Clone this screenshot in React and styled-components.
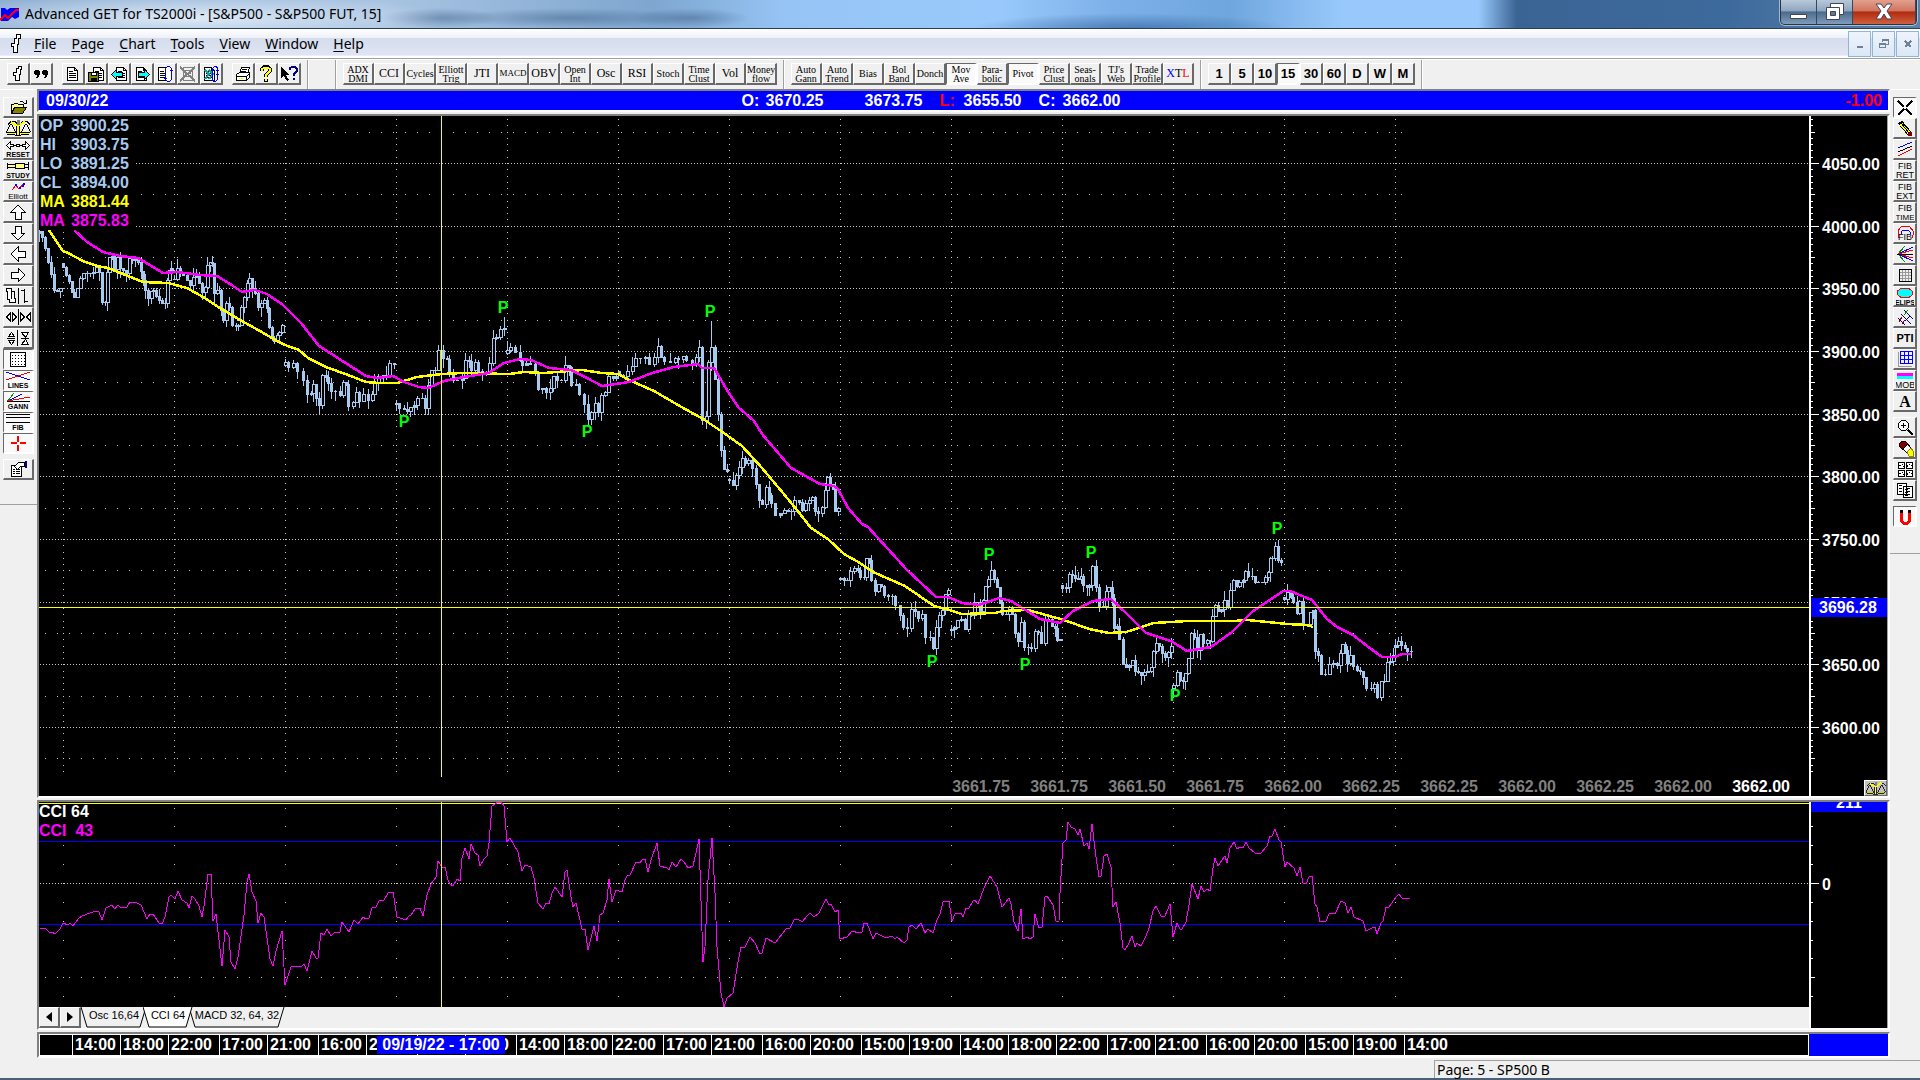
import React from 'react';
import styled, { createGlobalStyle, css } from 'styled-components';

const UI_FONT = '"Noto Sans", "Open Sans", sans-serif';
const CHART_FONT = '"Liberation Sans", Arial, sans-serif';

/* ---------- chart data ---------- */

const SESSIONS = [
  '39,231 42,237 45,248 48,262 51,274 54,290 57,291 60,288',
  '63,267 66,275 69,281 72,292 74,297 77,288 80,278 83,273 87,273 90,273 93,272 96,267 99,272 102,302 105,302 107,272 109,257 112,256 114,269 117,257 120,268 123,270 126,273 129,258 132,260 135,259 138,262 141,271 143,280 145,290 148,298 151,291 153,290 156,296 159,300 162,303 165,303 167,280 169,270 171,268',
  '174,279 177,268 180,272 183,275 187,280 190,285 193,277 196,275 199,283 202,292 205,287 207,265 210,262 212,263 214,293 217,290 219,290 221,310 223,320 226,303 229,307 232,325 236,326 238,325 241,307 244,297 247,283 249,278 252,288 255,293 258,307 261,303 264,300 267,308 269,327 272,338 274,341 277,335 279,332 282,325',
  '285,362 288,367 293,363 297,371 303,380 307,394 311,393 313,384 316,398 319,405 322,375 326,377 328,383 331,391 335,391 340,395 343,382 346,384 348,406 353,402 356,392 359,401 363,394 368,400 372,394 374,382 378,376 383,375 386,375 389,363 394,364',
  '396,403 399,408 404,409 407,411 410,407 414,405 417,398 422,398 425,408 428,385 431,370 435,370 438,350 441,350 443,358 447,359 449,373 453,380 457,380 462,378 465,360 469,361 471,370 475,362 478,371 482,373 486,372 489,363 493,338 496,337 500,329 504,328',
  '507,350 510,347 515,352 520,360 522,365 526,363 530,364 535,372 538,389 542,388 546,392 550,388 553,376 557,380 561,380 565,365 569,367 571,385 576,384 579,394 584,404 588,419 591,412 595,403 598,412 601,395 605,392 608,376 613,378 616,376',
  '619,375 623,376 627,371 632,366 635,358 640,358 645,357 649,364 654,357 658,346 661,357 664,361 670,362 675,358 678,359 683,356 686,360 692,363 696,357 699,347 702,420 706,416 708,362 711,347 715,379 718,414 721,450 724,469 727,471',
  '729,480 733,485 736,475 739,467 742,458 745,463 748,460 752,468 756,484 759,500 762,504 766,487 769,495 771,503 775,515 780,513 784,510 788,511 791,511 794,500 799,502 802,510 805,503 809,500 812,497 815,511 818,513 822,507 825,490 827,477 830,484 833,489 835,511 838,508',
  '840,578 844,580 847,580 850,571 854,568 858,570 860,577 864,577 866,558 869,560 871,580 875,591 878,584 881,586 884,595 888,596 892,596 895,605 900,615 903,627 907,628 911,609 915,611 918,618 922,614 925,637 930,637 933,648 936,627 939,615 942,610 945,594 948,590',
  '951,629 954,627 957,620 961,619 965,629 968,613 971,615 974,602 978,602 980,611 983,600 985,586 988,579 991,570 994,579 997,587 1000,603 1002,614 1006,614 1009,607 1012,614 1015,633 1018,641 1021,622 1024,647 1028,647 1031,648 1035,631 1038,632 1041,643 1045,619 1048,619 1052,626 1055,628 1057,640 1060,639',
  '1062,588 1066,587 1069,574 1072,575 1075,578 1078,579 1081,576 1083,585 1087,587 1089,585 1092,566 1096,587 1099,606 1103,606 1106,591 1108,587 1112,598 1114,628 1117,626 1119,639 1123,664 1126,667 1129,665 1132,660 1135,671 1138,672 1141,675 1144,672 1147,671 1151,667 1153,651 1156,643 1159,646 1162,653 1165,657 1168,652 1171,646',
  '1173,685 1177,672 1180,680 1183,681 1185,673 1188,658 1191,633 1194,637 1197,650 1200,634 1203,643 1207,640 1210,641 1212,616 1215,605 1218,611 1221,609 1224,600 1228,607 1230,590 1233,580 1237,586 1239,582 1243,580 1245,571 1248,576 1252,576 1255,582 1258,582 1262,582 1265,577 1268,572 1270,558 1272,558 1275,546 1278,560 1281,562',
  '1284,599 1287,592 1291,597 1293,602 1297,613 1299,601 1303,625 1307,624 1310,612 1313,610 1315,651 1318,655 1321,674 1325,674 1329,664 1333,663 1337,665 1340,653 1342,644 1345,650 1347,663 1350,655 1353,666 1357,670 1360,671 1363,677 1366,688 1371,688 1374,684 1377,697 1381,681 1384,681 1387,662 1390,661 1393,655',
  '1395,645 1398,641 1401,645 1405,648 1407,651 1411,651',
];

// bars whose high runs far past the body
const SPIKES = { 504: 317, 711: 321 };

const MA_SLOW =
  '49,230 63,251 68,253 83,261 97,266 108,268 123,274 143,282 168,283 187,288 203,297 220,308 240,320 260,331 277,341 285,345 299,350 308,358 326,367 348,375 366,382 379,383 397,383 417,377 442,374 462,373 509,374 524,372 544,373 582,370 602,373 618,374 629,380 654,391 678,405 703,419 721,431 742,446 762,468 783,493 797,510 811,528 828,539 844,554 860,563 873,572 905,586 934,606 946,609 962,614 995,613 1003,611 1028,610 1064,620 1089,629 1109,633 1126,632 1154,623 1187,621 1233,621 1248,620 1267,622 1287,624 1307,625 1313,627';

const MA_FAST =
  '74,230 87,242 103,252 120,256 138,258 163,273 177,272 200,275 217,276 230,284 242,292 255,290 267,294 283,305 301,323 319,346 344,362 366,376 377,378 393,376 404,382 419,387 428,388 444,381 464,377 489,373 504,363 520,359 531,360 549,368 571,370 585,377 602,386 629,382 652,373 674,367 698,364 702,368 714,368 727,390 738,407 754,421 762,434 791,468 820,484 834,486 838,489 848,508 862,524 868,527 907,570 936,597 948,597 962,603 979,605 999,598 1011,601 1040,619 1060,623 1073,611 1093,601 1111,599 1126,613 1146,633 1171,641 1187,651 1211,647 1232,632 1252,612 1283,591 1290,591 1312,600 1327,619 1337,627 1353,635 1367,646 1382,657 1395,657 1402,654 1411,654';

const CCI =
  '40,928 46,929 49,932 52,932 55,934 60,929 63,923 68,925 70,923 73,926 78,919 82,916 90,913 96,911 99,912 102,920 106,908 112,905 115,909 118,905 121,908 127,907 130,902 135,902 141,905 147,919 150,914 153,914 159,923 162,924 165,917 169,897 171,895 175,899 178,891 182,900 187,903 189,908 192,896 195,899 199,906 202,917 204,906 208,874 211,874 213,921 216,914 220,949 222,966 225,930 229,937 231,962 235,969 238,957 244,915 247,882 249,874 252,892 256,901 258,923 261,913 264,917 267,938 270,959 273,966 276,951 282,931 285,985 291,967 294,966 301,967 304,964 307,971 312,951 316,958 318,958 321,933 324,935 327,929 331,936 334,933 340,932 342,922 349,932 354,920 358,924 363,917 366,919 369,918 372,908 376,907 379,901 384,900 388,893 393,892 397,917 406,920 409,916 411,915 415,909 420,908 423,916 427,895 431,884 436,877 438,861 442,867 445,867 448,880 450,884 453,886 457,879 460,881 462,858 465,848 469,859 471,844 475,853 478,855 480,866 484,859 487,856 489,843 492,806 498,802 501,802 504,806 507,842 510,838 518,852 522,871 525,865 531,867 534,878 538,903 543,909 546,903 549,904 552,893 555,887 562,897 565,872 567,870 571,897 573,907 576,903 582,929 585,929 588,950 594,926 597,941 600,915 603,913 607,900 609,879 612,902 616,890 622,892 625,880 627,876 630,875 636,862 640,863 643,859 645,859 648,872 651,860 657,843 660,866 667,868 669,870 672,862 676,867 681,859 684,862 688,868 693,866 696,853 699,839 703,962 705,947 708,880 712,838 715,893 717,947 721,993 724,1007 727,998 733,993 738,962 741,947 745,947 750,937 755,943 760,954 762,953 766,938 775,943 786,929 790,928 794,920 798,919 802,922 807,916 810,913 814,917 819,913 826,899 829,905 831,904 835,912 838,910 840,939 847,937 852,931 859,933 862,932 864,923 867,923 873,939 876,933 886,938 892,936 895,939 897,937 904,943 907,940 909,927 912,925 916,929 921,923 925,933 928,929 933,933 937,920 940,914 943,902 949,901 952,921 955,914 961,913 963,917 966,908 969,908 973,901 975,900 978,904 984,888 990,876 997,887 1002,907 1009,898 1011,904 1014,922 1018,931 1021,909 1023,939 1027,937 1030,939 1033,937 1035,914 1039,928 1042,927 1045,897 1047,896 1051,902 1053,905 1056,921 1059,921 1060,893 1063,843 1066,840 1068,822 1071,827 1075,829 1078,835 1080,829 1084,846 1087,843 1089,849 1092,824 1096,857 1099,877 1101,876 1104,856 1107,854 1111,867 1113,907 1116,902 1120,923 1123,948 1125,950 1128,945 1132,936 1135,947 1137,943 1141,946 1146,936 1149,928 1153,911 1156,906 1161,916 1165,916 1170,904 1173,937 1177,923 1180,929 1182,929 1186,922 1189,905 1192,884 1198,899 1201,886 1204,892 1207,889 1210,891 1213,868 1215,858 1218,866 1222,860 1225,856 1227,863 1230,848 1234,842 1237,849 1240,847 1243,848 1246,842 1249,848 1255,853 1261,853 1267,846 1270,836 1272,836 1275,829 1279,840 1281,842 1285,867 1287,862 1294,868 1297,876 1300,867 1303,883 1306,884 1309,877 1312,876 1315,904 1317,907 1320,922 1326,921 1329,914 1332,913 1335,914 1341,901 1345,903 1348,913 1351,907 1354,917 1363,921 1366,931 1372,928 1375,927 1377,934 1381,923 1383,921 1386,907 1389,907 1396,897 1399,894 1402,898 1408,898 1410,898';

const PIVOTS = [
  [503, 307], [710, 311], [404, 421], [587, 431], [932, 661],
  [989, 554], [1025, 664], [1091, 552], [1175, 695], [1277, 528],
];

const LEFT = 39;
const TOP = 116;
const CCI_TOP = 802;
const SESSION_WIDTH = 111;

const priceY = (price) => Math.round(163 + (4050 - price) * 1.2535) - TOP;

const noise = (n) => {
  const v = Math.sin(n * 12.9898) * 43758.5453;
  return v - Math.floor(v);
};

const buildCandles = () => {
  const candles = [];
  SESSIONS.forEach((session) => {
    const points = session.split(' ').map((p) => p.split(',').map(Number));
    points.forEach(([x, close], i) => {
      const open = i === 0 ? close + Math.round(noise(x) * 8 - 4) : points[i - 1][1];
      const top = Math.min(open, close);
      const bottom = Math.max(open, close);
      const high = SPIKES[x] || top - Math.round(noise(x + 1) ** 2 * 9);
      const low = bottom + Math.round(noise(x + 2) ** 2 * 9);
      candles.push({ x, top, bottom, high, low, up: close < open });
    });
  });
  return candles;
};

const CANDLES = buildCandles();
const SESSION_LINES = Array.from({ length: 13 }, (_, i) => 63 + i * SESSION_WIDTH - LEFT);
const MAJOR_PRICES = [4050, 4000, 3950, 3900, 3850, 3800, 3750, 3700, 3650, 3600];
const MINOR_PRICES = [4075, 4025, 3975, 3925, 3875, 3825, 3775, 3725, 3675, 3625, 3575];
const TICK_PRICES = Array.from({ length: 105 }, (_, i) => 4085 - i * 5);
const CCI_TICKS = [808, 826, 845, 864, 883, 902, 921, 940, 958, 977, 996].map((y) => y - CCI_TOP);

const dots = (ys) => SESSION_LINES.map((x) => ys.map((y) => `M${x} ${y}.5h1`).join('')).join('');

const TIMES = ['14:00', '18:00', '22:00', '17:00', '21:00', '16:00', '20:00', '15:00', '19:00'];
const TIME_WIDTHS = [48, 48, 51, 48, 51, 48, 51, 48, 51];
const TIME_CELLS = Array.from({ length: 28 }, (_, i) => ({
  label: TIMES[i % 9],
  width: TIME_WIDTHS[i % 9],
}));

const LAST_PRICES = [
  '3661.75', '3661.75', '3661.50', '3661.75', '3662.00', '3662.25',
  '3662.25', '3662.00', '3662.25', '3662.00', '3662.00',
];

const STUDIES = [
  'ADX|DMI', 'CCI', 'Cycles', 'Elliott|Trig', 'JTI', 'MACD', 'OBV', 'Open|Int', 'Osc', 'RSI',
  'Stoch', 'Time|Clust', 'Vol', 'Money|flow',
];
const OVERLAYS = [
  'Auto|Gann', 'Auto|Trend', 'Bias', 'Bol|Band', 'Donch', 'Mov|Ave', 'Para-|bolic', 'Pivot',
  'Price|Clust', 'Seas-|onals', "TJ's|Web", 'Trade|Profile', 'XTL',
];
const PERIODS = ['1', '5', '10', '15', '30', '60', 'D', 'W', 'M'];
const MENUS = ['File', 'Page', 'Chart', 'Tools', 'View', 'Window', 'Help'];

/* ---------- icons ---------- */

const Icon = ({ w = 18, h = 18, children }) => (
  <svg width={w} height={h} viewBox={`0 0 ${w} ${h}`} fill="none" stroke="#000" shapeRendering="crispEdges" aria-hidden="true">
    {children}
  </svg>
);

const Caption = ({ x = 13, y = 16, size = 7, weight = 'bold', children }) => (
  <text x={x} y={y} textAnchor="middle" fill="#000" stroke="none" fontSize={size} fontWeight={weight} fontFamily={CHART_FONT}>
    {children}
  </text>
);

const BarShape = () => <path fill="#fff" d="M9.500 1.500h3v3h-1v5h-1v6h-4v-5h-2v-3h3v-4h2z" />;

const PageShape = ({ x = 0 }) => (
  <path transform={`translate(${x} 0)`} fill="#fff" d="M3.5 2.5h7l3 3v10h-10zM10.5 2.5v3h3M5 6.5h4M5 8.5h7M5 10.5h7M5 12.5h7" />
);

const ScalesIcon = () => (
  <Icon w={26} h={18}>
    <path d="M3 5.500l3-3h4l2 2M16 4.500l2-2h4l3 3M5.500 5l-4 8M6.500 5l4 8M20.500 5l-4 8M21.500 5l4 8M1 13.500h10M2 15.500h8M15 13.500h10M16 15.500h8" />
    <path stroke="#ff0" d="M2 14.500h8M16 14.500h8" />
    <path stroke="#ff0" strokeWidth="2" d="M13 5v11M14 7l6-5M12 7L6 3" />
    <path d="M11.500 7v9M14.500 7v9M10 16.500h6" />
    <path fill="#808080" stroke="none" d="M12 1h3v5h-3z" />
  </Icon>
);

const FILE_ICONS = {
  Bars: <Icon><BarShape /></Icon>,
  Quotes: (
    <Icon>
      <g fill="#000" stroke="none">
        <path d="M3 5h4v1h1v4H7v2H6v1H4v-1h1v-2H3V9H2V6h1z" />
        <path d="M11 5h4v1h1v4h-1v2h-1v1h-2v-1h1v-2h-2V9h-1V6h1z" />
      </g>
    </Icon>
  ),
};

const PAGE_ICONS = {
  New: <Icon><PageShape /></Icon>,
  Save: (
    <Icon>
      <PageShape x={3} />
      <path fill="#808000" d="M1.500 7.500h10v9h-10z" />
      <path fill="#fff" d="M4.500 7.500h5v3h-5z" />
      <path fill="#000" d="M4 13h5v3H4z" />
    </Icon>
  ),
  Previous: <Icon><PageShape x={3} /><path fill="#0ff" d="M1.500 9.500l5-5v3h6v4h-6v3z" /></Icon>,
  Next: <Icon><PageShape /><path fill="#0ff" d="M16.500 9.500l-5-5v3h-6v4h6v3z" /></Icon>,
  Reload: (
    <Icon>
      <PageShape x={-1} />
      <path stroke="#00f" fill="#fff" d="M9.500 3.500l2-2h2l2 2v11l-2 2h-2l-2-2zM14 5.500h3M11 13l-3 1" />
    </Icon>
  ),
  Delete: (
    <Icon>
      <g stroke="#808080">
        <path d="M4.500 2.500h9v13h-9zM6 5.500h6M6 8.500h6M6 11.500h6" />
        <path strokeWidth="2" d="M1 2l15 14M16 2L1 16" />
      </g>
    </Icon>
  ),
  'Reload all': (
    <Icon>
      <PageShape x={-1} />
      <path stroke="#0aa" strokeWidth="2" d="M3 5l4 4-4 5M7 5l4 4-4 5" />
      <path stroke="#00f" d="M10.500 3.500l2-2h2l1 2v11l-2 2h-2l-1-2zM14 5.500h3M14 9.500h3" />
    </Icon>
  ),
};

const HELP_ICONS = {
  Print: (
    <Icon>
      <path fill="#fff" d="M5.500 8.500l2-6h8l-2 6z" />
      <path fill="#fff" d="M2.500 9.500l3-2h10v5l-3 3h-10zM2.500 11.500h10v4M12.500 11.500l3-3M8 4.500h5M7 6.500h5" />
      <path stroke="#ff0" d="M5 13.500h4" />
    </Icon>
  ),
  Help: (
    <Icon>
      <path stroke="#000" strokeWidth="4" d="M5 6V4l2-2h4l2 2v2l-4 4v2M9 14v3" />
      <path stroke="#ff0" strokeWidth="2" d="M5 6V4l2-1h4l2 1v2l-4 4v2M9 14v2" />
    </Icon>
  ),
  'Context help': (
    <Icon>
      <path fill="#000" stroke="none" d="M1 2l8 8H6l3 5-2 1-3-5-3 2z" />
      <path stroke="#000080" strokeWidth="2" d="M10 5V3l2-1h3l2 2v2l-3 3v2M14 13v2" />
    </Icon>
  ),
};

const arrow = (angle) => (
  <Icon w={26} h={18}>
    <path transform={`rotate(${angle} 13 9)`} fill="#fff" d="M13 2l7 7h-4v7h-6V9H6z" />
  </Icon>
);

const LEFT_TOOLS = [
  { name: 'Open', icon: (
    <Icon w={26} h={18}>
      <path fill="#ff8" d="M6.500 15.500v-9h2l1-1h3l1 1h5v3" />
      <path fill="#808000" d="M6.500 15.500l3-6h12l-4 6z" />
      <path d="M15 3.500h2l3 2M21.500 2v4M19 5.500h3" />
    </Icon>
  ) },
  { name: 'Scale', icon: <ScalesIcon /> },
  { name: 'Reset', icon: (
    <Icon w={26} h={18}>
      <path fill="#fff" d="M1.500 5.500l4-4v3h3v2h-3v3zM24.500 5.500l-4-4v3h-3v2h3v3zM11.500 4.500h3v2h-3zM9 5.500h2M15 5.500h2" />
      <Caption y={17}>RESET</Caption>
    </Icon>
  ) },
  { name: 'Study', icon: (
    <Icon w={26} h={18}>
      <path fill="#ff8" d="M2.500 2v6M3 3.500h7v3H3M10.500 2.500h9v5h-9zM20 3.500h3M20 6.500h3M23.500 1v8" />
      <Caption y={17}>STUDY</Caption>
    </Icon>
  ) },
  { name: 'Elliott', icon: (
    <Icon w={26} h={18}>
      <path stroke="#f00" d="M7 8l4-5 3 4 5-6" />
      <path stroke="#00f" strokeWidth="2" d="M10 3h2M14 6h2M18 2h2M18 5v-2" />
      <Caption y={17} size={8} weight="normal">Elliott</Caption>
    </Icon>
  ) },
  { name: 'Up', icon: arrow(0) },
  { name: 'Down', icon: arrow(180) },
  { name: 'Left', icon: arrow(-90) },
  { name: 'Right', icon: arrow(90) },
  { name: 'Bar style', icon: (
    <Icon w={26} h={18}>
      <path fill="#fff" d="M1.500 1.500h5v3h3v7h1v4h-6v-3h-2v-8h-1z" />
      <path d="M6.500 5v7M13.500 1v16M16 3.500h3M19.500 2v14M20 14.500h3" />
    </Icon>
  ) },
  { name: 'Width', icon: (
    <Icon w={26} h={18}>
      <path d="M13.500 1v16M1.500 9l4-4v8zM11.500 9l-4-4v8zM15.500 5v8l4-4zM25.500 5v8l-4-4z" fill="#fff" />
    </Icon>
  ) },
  { name: 'Height', icon: (
    <Icon w={26} h={18}>
      <path d="M12.500 1v16M2 9.500h8M16 9.500h8M3.500 7.500h6l-3-4zM3.500 11.500h6l-3 4zM16.500 3.500h7l-3 5zM16.500 15.500h7l-3-5z" fill="#fff" />
    </Icon>
  ) },
  { name: 'Grid', pressed: true, icon: (
    <Icon w={26} h={18}>
      <path fill="#fff" d="M5.500 2.500h15v14h-15z" />
      <path strokeDasharray="1 2" d="M7 5.500h13M7 8.500h13M7 11.500h13M7 14.500h13" />
    </Icon>
  ) },
  { name: 'Lines', pressed: true, icon: (
    <Icon w={26} h={18}>
      <path stroke="#00f" d="M1 1l24 8" />
      <path stroke="#f00" d="M1 9l24-8" />
      <Caption y={17}>LINES</Caption>
    </Icon>
  ) },
  { name: 'Gann', pressed: true, icon: (
    <Icon w={26} h={18}>
      <path stroke="#080" d="M3 9l6-8" />
      <path stroke="#00f" d="M3 9l14-7" />
      <path stroke="#f00" d="M3 9l22-4M2 8.500h6" />
      <path d="M2 9.500h23" />
      <Caption y={17}>GANN</Caption>
    </Icon>
  ) },
  { name: 'Fib', pressed: true, icon: (
    <Icon w={26} h={18}>
      <path d="M1 1.500h24M1 4.500h24M1 9.500h24" />
      <Caption y={17}>FIB</Caption>
    </Icon>
  ) },
  { name: 'Crosshair', pressed: true, icon: (
    <Icon w={26} h={18}>
      <path stroke="#f00" strokeWidth="2" d="M13 2v6M13 11v6M6 9h6M15 9h6" />
    </Icon>
  ) },
  { name: 'Properties', gap: true, icon: (
    <Icon w={26} h={18}>
      <path fill="#fff" d="M6.500 5.500h10v11h-10zM8 9.500h2M11 9.500h4M8 11.500h2M11 11.500h4M8 13.500h2M11 13.500h4" />
      <path fill="#fff" d="M9.500 6.500l4-4h6v4h-4l-3 3z" />
      <path stroke="#000080" strokeWidth="2" d="M21 1v7" />
    </Icon>
  ) },
];

const fib = (word) => (
  <Icon>
    <Caption x={9} y={8} size={9} weight="normal">FIB</Caption>
    <Caption x={9} y={17} size={word.length > 3 ? 8 : 9} weight="normal">{word}</Caption>
  </Icon>
);

const RIGHT_TOOLS = [
  { name: 'Pointer', pressed: true, icon: <Icon><path strokeWidth="2" d="M2 3l6 6M16 3l-6 6M2 17l6-6M16 17l-6-6" /></Icon> },
  { name: 'Pencil', icon: (
    <Icon>
      <path strokeWidth="5" d="M4 3l10 12" />
      <path stroke="#ff0" strokeWidth="3" d="M5 5l8 9" />
      <path fill="#800000" stroke="none" d="M12 13h4v4h-4z" />
      <path d="M5 4l8 10" />
    </Icon>
  ) },
  { name: 'Channels', icon: (
    <Icon>
      <path stroke="#00f" d="M2 8l14-6" />
      <path d="M2 12l14-6" />
      <path stroke="#f00" d="M2 16l14-7" />
    </Icon>
  ) },
  { name: 'Fib retracement', icon: fib('RET') },
  { name: 'Fib extension', icon: fib('EXT') },
  { name: 'Fib time', icon: fib('TIME') },
  { name: 'Fib circle', icon: (
    <Icon>
      <path stroke="#f00" d="M3 14l-1-3V7l3-4 3-1h3l3 1 3 4v4l-1 3" />
      <path stroke="#00f" d="M5 10V8l2-2h5l2 2v2" />
      <Caption x={9} y={16} size={9} weight="normal">FIB</Caption>
    </Icon>
  ) },
  { name: 'Gann fan', icon: (
    <Icon>
      <path stroke="#080" d="M2 9l7-8M2 9l7 8" />
      <path stroke="#00f" d="M2 9l15-7M2 9l15 7" />
      <path stroke="#f00" d="M2 9l15-4M2 9l15 4" />
      <path d="M1 9.500h16" />
    </Icon>
  ) },
  { name: 'Gann box', icon: (
    <Icon>
      <path stroke="#999" d="M6.500 3v13M9.500 3v13M12.500 3v13M3 6.500h12M3 9.500h12M3 12.500h12" />
      <path d="M3.500 3.500h12v12h-12z" />
    </Icon>
  ) },
  { name: 'Ellipse', icon: (
    <Icon>
      <ellipse cx="9" cy="6" rx="8" ry="5" fill="#0ff" stroke="#f00" />
      <Caption x={9} y={18}>ELIPS</Caption>
    </Icon>
  ) },
  { name: 'Regression', icon: (
    <Icon>
      <path stroke="#000080" d="M8 2l9 9M5 6l10 10M2 10l7 7M9 13l5-5" />
      <path stroke="#080" d="M8 7l4-5" />
      <path stroke="#800000" d="M3 14l3-5M6 16l3-4" />
    </Icon>
  ) },
  { name: 'PTI', icon: <Icon w={20}><Caption x={10} y={13} size={11}>PTI</Caption></Icon> },
  { name: 'Blue grid', icon: (
    <Icon>
      <path stroke="#00f" d="M4.500 1.500h12v12h-12zM8.500 1v13M12.500 1v13M4 5.500h13M4 9.500h13" />
      <path stroke="#999" d="M2.500 2v14M2 16.500h14" />
    </Icon>
  ) },
  { name: 'MOB', icon: (
    <Icon>
      <path stroke="#f0f" strokeWidth="3" d="M1 3.500h16" />
      <path stroke="#0ff" strokeWidth="3" d="M1 6.500h16" />
      <Caption x={9} y={17} size={9} weight="normal">MOB</Caption>
    </Icon>
  ) },
  { name: 'Text', icon: (
    <Icon>
      <text x="9" y="15" textAnchor="middle" stroke="none" fill="#000" fontSize="16" fontWeight="bold" fontFamily="Liberation Serif, serif">A</text>
    </Icon>
  ) },
  { name: 'Zoom', gap: true, icon: (
    <Icon>
      <path fill="#fff" d="M2.500 5.500l3-3h4l3 3v4l-3 3h-4l-3-3zM7.500 5v5M5 7.500h5" />
      <path strokeWidth="2" d="M12 12l5 5" />
    </Icon>
  ) },
  { name: 'Eraser', icon: (
    <Icon>
      <path fill="#800000" d="M3 5l3-3h3l3 3-5 6-4-4z" />
      <path fill="#fff" d="M7 10l5-5 3 4-4 5z" />
      <path fill="#ff0" stroke="#880" d="M11 13l4-4 2 3v5h-4z" />
    </Icon>
  ) },
  { name: 'Tile', icon: (
    <Icon>
      <path fill="#fff" d="M2.500 2.500h6v6h-6zM10.500 2.500h6v6h-6zM2.500 10.500h6v6h-6zM10.500 10.500h6v6h-6z" />
      <path strokeDasharray="2 1" d="M3 6l3-2 2 3M11 7l2-3 3 2M3 14l3-2 2 3M11 15l2-3 3 2" />
    </Icon>
  ) },
  { name: 'Pages', icon: (
    <Icon>
      <path fill="#fff" d="M1.500 2.500h9v11h-9zM7.500 5.500h9v11h-9zM3 5l3-1M3 8l3-1M3 11l3-1M9 9l5-2M9 12l5-2M9 15l5-2" />
    </Icon>
  ) },
  { name: 'Magnet', gap: true, pressed: true, icon: (
    <Icon>
      <path stroke="#f00" strokeWidth="3" d="M5.500 5v9l2 2h4l2-2V5" />
      <path strokeWidth="3" d="M5.500 3v3M13.500 3v3" />
    </Icon>
  ) },
];

/* ---------- app ---------- */

const MenuLabel = ({ children }) => (
  <MenuButton type="button">
    <u>{children[0]}</u>
    {children.slice(1)}
  </MenuButton>
);

const StudyButton = ({ label, pressed }) => {
  const lines = label.split('|');
  return (
    <ToolButton type="button" $w={31} $pressed={pressed} aria-pressed={pressed}>
      <StudyText $small={lines.length > 1 || label.length > 3} $tiny={label === 'MACD'}>
        {label === 'XTL' ? <><Blue>X</Blue>T<Red>L</Red></> : lines.map((line) => <span key={line}>{line}</span>)}
      </StudyText>
    </ToolButton>
  );
};

const IconGroup = ({ icons }) => (
  <ButtonRow>
    {Object.entries(icons).map(([name, icon]) => (
      <ToolButton key={name} type="button" $w={23} aria-label={name}>{icon}</ToolButton>
    ))}
  </ButtonRow>
);

const PriceChart = () => (
  <ChartSvg role="img" aria-label="S&P500 price" shapeRendering="crispEdges">
    <g stroke="#c8c8c8">
      {MAJOR_PRICES.map((p) => (
        <line key={p} x1="1" x2="100%" y1={priceY(p) + 0.5} y2={priceY(p) + 0.5} strokeDasharray="1 2" />
      ))}
      {MINOR_PRICES.map((p) => (
        <line key={p} x1="6" x2="1366" y1={priceY(p) + 0.5} y2={priceY(p) + 0.5} strokeDasharray="1 11" />
      ))}
      <path d={dots(TICK_PRICES.map(priceY))} />
    </g>
    <g transform={`translate(${-LEFT} ${-TOP})`}>
      {CANDLES.map((c) => (
        <g key={c.x}>
          <rect x={c.x} y={c.high} width="1" height={c.low - c.high + 1} fill="#a6caf0" />
          <rect x={c.x - 1} y={c.top} width={c.up ? 4 : 3} height={c.bottom - c.top + 1} fill="#a6caf0" />
          {c.up && c.bottom - c.top > 2 && (
            <rect x={c.x} y={c.top + 1} width="2" height={c.bottom - c.top - 1} fill="#000" />
          )}
        </g>
      ))}
      <polyline points={MA_SLOW} fill="none" stroke="#ff0" strokeWidth="2.5" />
      <polyline points={MA_FAST} fill="none" stroke="#f0f" strokeWidth="2.5" />
      {PIVOTS.map(([x, y]) => (
        <PivotText key={x} x={x} y={y + 6}>P</PivotText>
      ))}
    </g>
    <g stroke="#ff0">
      <line x1="402.500" x2="402.500" y1="0" y2="661" />
      <line x1="0" x2="100%" y1="491.500" y2="491.500" />
    </g>
  </ChartSvg>
);

const PriceAxis = () => (
  <ChartSvg role="img" aria-label="Price scale" shapeRendering="crispEdges">
    <g stroke="#fff">
      {TICK_PRICES.map((p) => {
        const size = p % 50 === 0 ? 8 : p % 25 === 0 ? 4 : 2;
        return <line key={p} x1="0" x2={size} y1={priceY(p) + 0.5} y2={priceY(p) + 0.5} />;
      })}
    </g>
    {MAJOR_PRICES.map((p) => (
      <AxisText key={p} x="11" y={priceY(p) + 7}>{p}.00</AxisText>
    ))}
  </ChartSvg>
);

const CciChart = () => (
  <ChartSvg role="img" aria-label="CCI" shapeRendering="crispEdges">
    <path stroke="#c8c8c8" d={dots(CCI_TICKS)} />
    <line x1="1" x2="100%" y1="81.500" y2="81.500" stroke="#c8c8c8" strokeDasharray="1 2" />
    <line x1="6" x2="1366" y1="175.500" y2="175.500" stroke="#c8c8c8" strokeDasharray="1 11" />
    <line x1="0" x2="100%" y1="39.500" y2="39.500" stroke="#00f" />
    <line x1="0" x2="100%" y1="122.500" y2="122.500" stroke="#00f" />
    <line x1="0" x2="100%" y1="1.500" y2="1.500" stroke="#ff0" />
    <g transform={`translate(${-LEFT} ${-CCI_TOP})`}>
      <polyline points={CCI} fill="none" stroke="#f0f" />
    </g>
    <line x1="402.500" x2="402.500" y1="0" y2="100%" stroke="#ff0" />
  </ChartSvg>
);

const TabShape = ({ width, active }) => (
  <TabSvg width={width} height="21" viewBox={`0 0 ${width} 21`} aria-hidden="true">
    <path d={`M0 0l6 20h${width - 13}l6-20`} fill={active ? '#fff' : '#f0f0f0'} stroke="#000" />
  </TabSvg>
);

const App = () => (
  <Screen>
    <GlobalStyle />
    <TitleBar>
      <svg width="20" height="18" viewBox="0 0 20 18" aria-hidden="true">
        <path fill="#00f" d="M1 3h4l2 2 3-2h9v9l-4 2-3-2-4 4H1z" />
        <path fill="none" stroke="#f00" strokeWidth="2" d="M0 15l5-5 3 3 8-8h3" />
      </svg>
      <h1>Advanced GET for TS2000i - [S&amp;P500 - S&amp;P500 FUT, 15]</h1>
      <CaptionButtons>
        <CaptionButton type="button" aria-label="Minimize">
          <svg width="20" height="20" viewBox="0 0 20 20"><path fill="#fff" stroke="#445" d="M1.500 12.500h16v4h-16z" /></svg>
        </CaptionButton>
        <CaptionButton type="button" aria-label="Restore">
          <svg width="20" height="20" viewBox="0 0 20 20" fill="#fff" stroke="#445">
            <path d="M5.500 1.500h13v11h-13z" /><path d="M1.500 5.500h13v12h-13z" /><path fill="#678" d="M5.500 9.500h5v4h-5z" />
          </svg>
        </CaptionButton>
        <CaptionButton type="button" aria-label="Close" $close>
          <svg width="20" height="20" viewBox="0 0 20 20"><path fill="#fff" stroke="#445" d="M2 2h5l3 4 3-4h5l-5 7 5 8h-5l-3-5-3 5H2l5-8z" /></svg>
        </CaptionButton>
      </CaptionButtons>
    </TitleBar>

    <MenuBar>
      <Icon h={22}><path fill="#fff" d="M9.500 1.500h4v4h-2v6h-1v8h-4v-6h-2v-3h3v-5h2z" /></Icon>
      <MenuList>{MENUS.map((m) => <MenuLabel key={m}>{m}</MenuLabel>)}</MenuList>
      <ChildButton type="button" aria-label="Minimize chart"><Icon w={12} h={12}><path stroke="#6f8195" strokeWidth="2" d="M3 9h6" /></Icon></ChildButton>
      <ChildButton type="button" aria-label="Restore chart"><Icon w={12} h={12}><path stroke="#6f8195" d="M4.500 4V1.500h6v5H8M4 2.500h7M1.500 5.500h6v4h-6zM1 6.500h7" /></Icon></ChildButton>
      <ChildButton type="button" aria-label="Close chart"><Icon w={12} h={12}><path stroke="#6f8195" strokeWidth="2" d="M3 3l6 6M9 3L3 9" /></Icon></ChildButton>
    </MenuBar>

    <ToolBar>
      <Band $w={308}>
        <IconGroup icons={FILE_ICONS} />
        <IconGroup icons={PAGE_ICONS} />
        <IconGroup icons={HELP_ICONS} />
      </Band>
      <Band $w={28} />
      <Band>
        <ButtonRow>{STUDIES.map((s) => <StudyButton key={s} label={s} />)}</ButtonRow>
      </Band>
      <Band>
        <ButtonRow>
          {OVERLAYS.map((s) => <StudyButton key={s} label={s} pressed={s === 'Mov|Ave' || s === 'Pivot'} />)}
        </ButtonRow>
      </Band>
      <Band>
        <ButtonRow>
          {PERIODS.map((p) => (
            <ToolButton key={p} type="button" $w={23} $pressed={p === '15'} aria-pressed={p === '15'}>
              <PeriodText>{p}</PeriodText>
            </ToolButton>
          ))}
        </ButtonRow>
      </Band>
    </ToolBar>

    <Workspace>
      <SideBar $h={416}>
        {LEFT_TOOLS.map((t) => (
          <SideButton key={t.name} type="button" $w={31} $gap={t.gap} $pressed={t.pressed} aria-label={t.name}>{t.icon}</SideButton>
        ))}
      </SideBar>

      <Center>
        <Sunken>
          <InfoBar>
            <span>09/30/22</span>
            <Quotes>
              <Quote><b>O:</b>3670.25</Quote>
              <Quote><b />3673.75</Quote>
              <Quote><b><Red>L:</Red></b>3655.50</Quote>
              <Quote><b>C:</b>3662.00</Quote>
            </Quotes>
            <Change>-1.00</Change>
          </InfoBar>
        </Sunken>

        <Sunken $grow>
          <Plot>
            <PriceChart />
            <Legend>
              <dt>OP</dt><dd>3900.25</dd>
              <dt>HI</dt><dd>3903.75</dd>
              <dt>LO</dt><dd>3891.25</dd>
              <dt>CL</dt><dd>3894.00</dd>
              <LegendKey $color="#ff0">MA</LegendKey><LegendValue $color="#ff0">3881.44</LegendValue>
              <LegendKey $color="#f0f">MA</LegendKey><LegendValue $color="#f0f">3875.83</LegendValue>
            </Legend>
            <LastPrices>{LAST_PRICES.map((p, i) => <li key={i}>{p}</li>)}</LastPrices>
          </Plot>
          <Axis>
            <PriceAxis />
            <PriceTag>3696.28</PriceTag>
            <ScaleButton type="button" aria-label="Scale"><ScalesIcon /></ScaleButton>
          </Axis>
        </Sunken>

        <Sunken>
          <StudyColumn>
            <CciPlot>
              <CciChart />
              <CciLegend>
                <div>CCI 64</div>
                <Magenta>CCI&nbsp;&nbsp;43</Magenta>
              </CciLegend>
            </CciPlot>
            <TabRow>
              <ScrollButton type="button" aria-label="Scroll left"><svg width="6" height="10"><path d="M6 0v10L0 5z" /></svg></ScrollButton>
              <ScrollButton type="button" aria-label="Scroll right"><svg width="6" height="10"><path d="M0 0v10l6-5z" /></svg></ScrollButton>
              <Tab type="button" $w={66}><TabShape width={66} /><span>Osc 16,64</span></Tab>
              <Tab type="button" $w={50} $active><TabShape width={50} active /><span>CCI 64</span></Tab>
              <Tab type="button" $w={96}><TabShape width={96} /><span>MACD 32, 64, 32</span></Tab>
            </TabRow>
          </StudyColumn>
          <Axis>
            <ChartSvg shapeRendering="crispEdges" aria-hidden="true">
              {CCI_TICKS.map((y) => (
                <line key={y} x1="0" x2={y === 81 ? 8 : y === 175 ? 4 : 2} y1={y + 0.5} y2={y + 0.5} stroke="#fff" />
              ))}
              <AxisText x="11" y="88">0</AxisText>
            </ChartSvg>
            <CciTag><span>211</span></CciTag>
          </Axis>
        </Sunken>

        <Sunken>
          <TimeAxis>
            <TimeStart />
            {TIME_CELLS.map((c, i) => <TimeCell key={i} $w={c.width}>{c.label}</TimeCell>)}
            <TimeTag>09/19/22 - 17:00</TimeTag>
          </TimeAxis>
          <TimeCorner />
        </Sunken>
      </Center>

      <SideBar $h={465}>
        {RIGHT_TOOLS.map((t) => (
          <SideButton key={t.name} type="button" $w={24} $gap={t.gap} $pressed={t.pressed} aria-label={t.name}>{t.icon}</SideButton>
        ))}
      </SideBar>
    </Workspace>

    <StatusBar>
      <StatusCell>Page: 5 - SP500 B</StatusCell>
    </StatusBar>
  </Screen>
);

/* ---------- styles ---------- */

const GlobalStyle = createGlobalStyle`
  * {
    box-sizing: border-box;
  }
  body {
    margin: 0;
    background: #f0f0f0;
    font-family: ${UI_FONT};
    color: #000;
  }
  button {
    font-family: inherit;
    color: inherit;
    padding: 0;
    margin: 0;
  }
`;

const Screen = styled.div`
  display: flex;
  flex-direction: column;
  height: 100vh;
  overflow: hidden;
`;

const TitleBar = styled.header`
  display: flex;
  align-items: center;
  gap: 5px;
  flex: none;
  height: 29px;
  border-bottom: 1px solid #2c3f55;
  background:
    radial-gradient(ellipse 260px 24px at 190px 18px, rgba(235, 243, 252, 0.85), transparent),
    radial-gradient(ellipse 60px 10px at 440px 18px, rgba(60, 95, 135, 0.5), transparent),
    radial-gradient(ellipse 120px 10px at 570px 18px, rgba(60, 95, 135, 0.5), transparent),
    radial-gradient(ellipse 60px 10px at 690px 18px, rgba(60, 95, 135, 0.5), transparent),
    radial-gradient(ellipse 160px 16px at 1130px 29px, rgba(50, 100, 160, 0.7), transparent),
    linear-gradient(90deg, #8fb0d3 0, #a9c4e2 20%, #7ea6cf 34%, #96c4f5 41%, #99c9fc 52%, #7db0e8 58%, #6fa6de 64%, #99c9fc 70%, #99c9fc 77%, #3a6494 79%, #3d6a9c 90%, #5c82ab 100%);

  h1 {
    margin: 0;
    flex: 1;
    font-size: 14px;
    font-weight: 400;
    line-height: 20px;
  }
`;

const CaptionButtons = styled.div`
  display: flex;
  align-self: flex-start;
  height: 25px;
  margin-right: 3px;
  border: 1px solid #24364c;
  border-top: 0;
  border-radius: 0 0 5px 5px;
  overflow: hidden;
  box-shadow: 0 0 0 1px rgba(255, 255, 255, 0.5);
`;

const CaptionButton = styled.button`
  display: grid;
  place-items: center;
  width: ${({ $close }) => ($close ? 63 : 36)}px;
  border: 0;
  border-right: 1px solid #33475f;
  background: ${({ $close }) =>
    $close
      ? 'linear-gradient(#e2a08c 0, #d07560 45%, #b02a10 50%, #d0603c 100%)'
      : 'linear-gradient(#b8c8da 0, #8fa6c0 45%, #4c6a8c 50%, #7f9cbb 100%)'};
`;

const MenuBar = styled.nav`
  display: flex;
  align-items: center;
  flex: none;
  height: 30px;
  padding-left: 7px;
  border-bottom: 1px solid #a0a0a0;
  background: linear-gradient(#fff 0, #eef1f8 30%, #d5dcec 32%, #dfe5f4 90%, #fff 94%);
`;

const MenuList = styled.div`
  display: flex;
  flex: 1;
  gap: 15px;
  padding-left: 9px;
`;

const MenuButton = styled.button`
  border: 0;
  background: none;
  font-size: 14px;
  line-height: 20px;

  u {
    text-underline-offset: 2px;
  }
`;

const ChildButton = styled.button`
  display: grid;
  place-items: center;
  width: 23px;
  height: 26px;
  margin-right: 1px;
  border: 1px solid #93b5cf;
  background: linear-gradient(#eef4fb, #dbe8f6);
`;

const ToolBar = styled.div`
  display: flex;
  flex: none;
  height: 30px;
  border-top: 1px solid #fff;
`;

const Band = styled.div`
  display: flex;
  align-items: flex-start;
  gap: 9px;
  width: ${({ $w }) => ($w ? `${$w}px` : 'auto')};
  padding: 3px 6px 0 7px;
  border-right: 1px solid #a0a0a0;
  box-shadow: 1px 0 0 #fff;
`;

const ButtonRow = styled.div`
  display: flex;
`;

const raised = css`
  border-color: #fff #696969 #696969 #fff;
  background: #f0f0f0;
`;

const pressedLook = css`
  border-color: #696969 #fff #fff #696969;
  background: #f9f9f9;
`;

const ToolButton = styled.button`
  display: grid;
  place-items: center;
  flex: none;
  width: ${({ $w }) => $w}px;
  height: 22px;
  border-style: solid;
  border-width: 1px 2px 2px 1px;
  overflow: hidden;
  ${({ $pressed }) => ($pressed ? pressedLook : raised)}
`;

const StudyText = styled.span`
  display: ${({ $small }) => ($small ? 'grid' : 'block')};
  justify-items: center;
  font-family: "Liberation Serif", serif;
  font-size: ${({ $small, $tiny }) => ($tiny ? 9 : $small ? 10 : 12)}px;
  line-height: 9px;
`;

const PeriodText = styled.span`
  font-family: ${CHART_FONT};
  font-size: 13px;
  font-weight: bold;
  line-height: 18px;
`;

const Blue = styled.span`
  color: #00f;
`;

const Red = styled.span`
  color: #f00;
`;

const Magenta = styled.div`
  color: #f0f;
`;

const Workspace = styled.main`
  display: grid;
  grid-template-columns: 37px 1fr 30px;
  flex: 1;
  min-height: 0;
`;

const SideBar = styled.div`
  display: flex;
  flex-direction: column;
  align-items: flex-start;
  height: ${({ $h }) => $h}px;
  padding: 7px 0 0 3px;
  border-top: 1px solid #fff;
  border-bottom: 1px solid #a0a0a0;
`;

const SideButton = styled(ToolButton)`
  height: 21px;
  margin-top: ${({ $gap }) => ($gap ? 5 : 0)}px;
`;

const Center = styled.section`
  display: flex;
  flex-direction: column;
  gap: 2px;
  min-width: 0;
  min-height: 0;
  font-family: ${CHART_FONT};
  font-size: 16px;
  font-weight: bold;
`;

const Sunken = styled.div`
  display: flex;
  flex: ${({ $grow }) => ($grow ? '1' : 'none')};
  min-height: 0;
  border: 2px solid;
  border-color: #808080 #fff #fff #808080;
`;

const InfoBar = styled.div`
  display: grid;
  grid-template-columns: 38% auto 1fr;
  flex: 1;
  height: 19px;
  background: #00f;
  color: #fff;
  line-height: 19px;

  > span {
    padding-left: 7px;
  }
`;

const Quotes = styled.div`
  display: flex;
  gap: 16px;
`;

const Quote = styled.div`
  display: flex;
  width: 83px;

  b {
    width: 24px;
  }
`;

const Change = styled.div`
  padding-right: 6px;
  text-align: right;
  color: #f00;
`;

const Plot = styled.div`
  position: relative;
  flex: 1;
  min-width: 0;
  background: #000;
  overflow: hidden;
`;

const ChartSvg = styled.svg`
  display: block;
  width: 100%;
  height: 100%;
`;

const PivotText = styled.text`
  fill: #0f0;
  text-anchor: middle;
  font-size: 16px;
`;

const AxisText = styled.text`
  fill: #fff;
  font-size: 16px;
`;

const Legend = styled.dl`
  position: absolute;
  top: 0;
  left: 0;
  display: grid;
  grid-template-columns: 31px 64px;
  margin: 0;
  padding-left: 1px;
  background: #000;
  color: #a6caf0;
  line-height: 19px;

  dd {
    margin: 0;
  }
`;

const LegendKey = styled.dt`
  color: ${({ $color }) => $color};
`;

const LegendValue = styled.dd`
  color: ${({ $color }) => $color};
`;

const LastPrices = styled.ul`
  position: absolute;
  right: 19px;
  bottom: 0;
  display: flex;
  margin: 0;
  padding: 0;
  list-style: none;
  color: #808080;
  line-height: 19px;

  li {
    width: 78px;
    text-align: right;
  }
  li:last-child {
    color: #fff;
  }
`;

const Axis = styled.div`
  position: relative;
  flex: none;
  width: 79px;
  border-left: 2px solid #fff;
  border-right: 1px solid #a0a0a0;
  background: #000;
  overflow: hidden;
`;

const PriceTag = styled.div`
  position: absolute;
  top: 482px;
  left: 0;
  right: 0;
  padding-left: 8px;
  background: #00f;
  color: #fff;
  line-height: 19px;
`;

const ScaleButton = styled.button`
  position: absolute;
  right: 0;
  bottom: 0;
  display: grid;
  place-items: center;
  width: 23px;
  height: 16px;
  border: 1px solid;
  border-color: #fff #696969 #696969 #fff;
  background: #c0c0c0;
  overflow: hidden;

  svg {
    width: 21px;
    height: 15px;
  }
`;

const StudyColumn = styled.div`
  display: flex;
  flex-direction: column;
  flex: 1;
  min-width: 0;
`;

const CciPlot = styled(Plot)`
  flex: none;
  height: 205px;
`;

const CciLegend = styled.div`
  position: absolute;
  top: 0;
  left: 0;
  color: #fff;
  line-height: 19px;
`;

const CciTag = styled.div`
  position: absolute;
  top: 0;
  left: 0;
  right: 0;
  height: 10px;
  display: flex;
  align-items: flex-end;
  justify-content: center;
  background: #00f;
  color: #fff;
  line-height: 19px;
  overflow: hidden;
`;

const TabRow = styled.div`
  display: flex;
  height: 21px;
  background: #f0f0f0;
  font-size: 11px;
  font-weight: normal;
`;

const ScrollButton = styled(ToolButton).attrs({ $w: 21 })`
  height: 21px;
`;

const Tab = styled.button`
  position: relative;
  z-index: ${({ $active }) => ($active ? 1 : 0)};
  width: ${({ $w }) => $w}px;
  height: 21px;
  margin-right: -4px;
  border: 0;
  background: none;
  font-size: 11px;
  line-height: 14px;
  white-space: nowrap;

  span {
    position: relative;
    display: block;
    height: 19px;
  }
`;

const TabSvg = styled.svg`
  position: absolute;
  top: 0;
  left: 0;
`;

const TimeAxis = styled.div`
  position: relative;
  display: flex;
  flex: 1;
  min-width: 0;
  height: 22px;
  border: 1px solid #fff;
  background: #000;
  color: #fff;
  line-height: 20px;
  overflow: hidden;
`;

const TimeStart = styled.div`
  flex: none;
  width: 32px;
`;

const TimeCell = styled.div`
  flex: none;
  width: ${({ $w }) => $w}px;
  padding-left: 2px;
  border-left: 1px solid #fff;
`;

const TimeTag = styled.div`
  position: absolute;
  top: 1px;
  left: 337px;
  width: 128px;
  background: #00f;
  text-align: center;
  line-height: 18px;
`;

const TimeCorner = styled.div`
  flex: none;
  width: 79px;
  background: #00f;
`;

const StatusBar = styled.footer`
  display: flex;
  justify-content: flex-end;
  flex: none;
  height: 22px;
  padding-top: 2px;
  border-bottom: 2px solid #4a5f78;
`;

const StatusCell = styled.div`
  width: 486px;
  padding-left: 2px;
  border-top: 1px solid #a0a0a0;
  border-left: 1px solid #a0a0a0;
  font-size: 14px;
  line-height: 17px;
`;

export default App;
